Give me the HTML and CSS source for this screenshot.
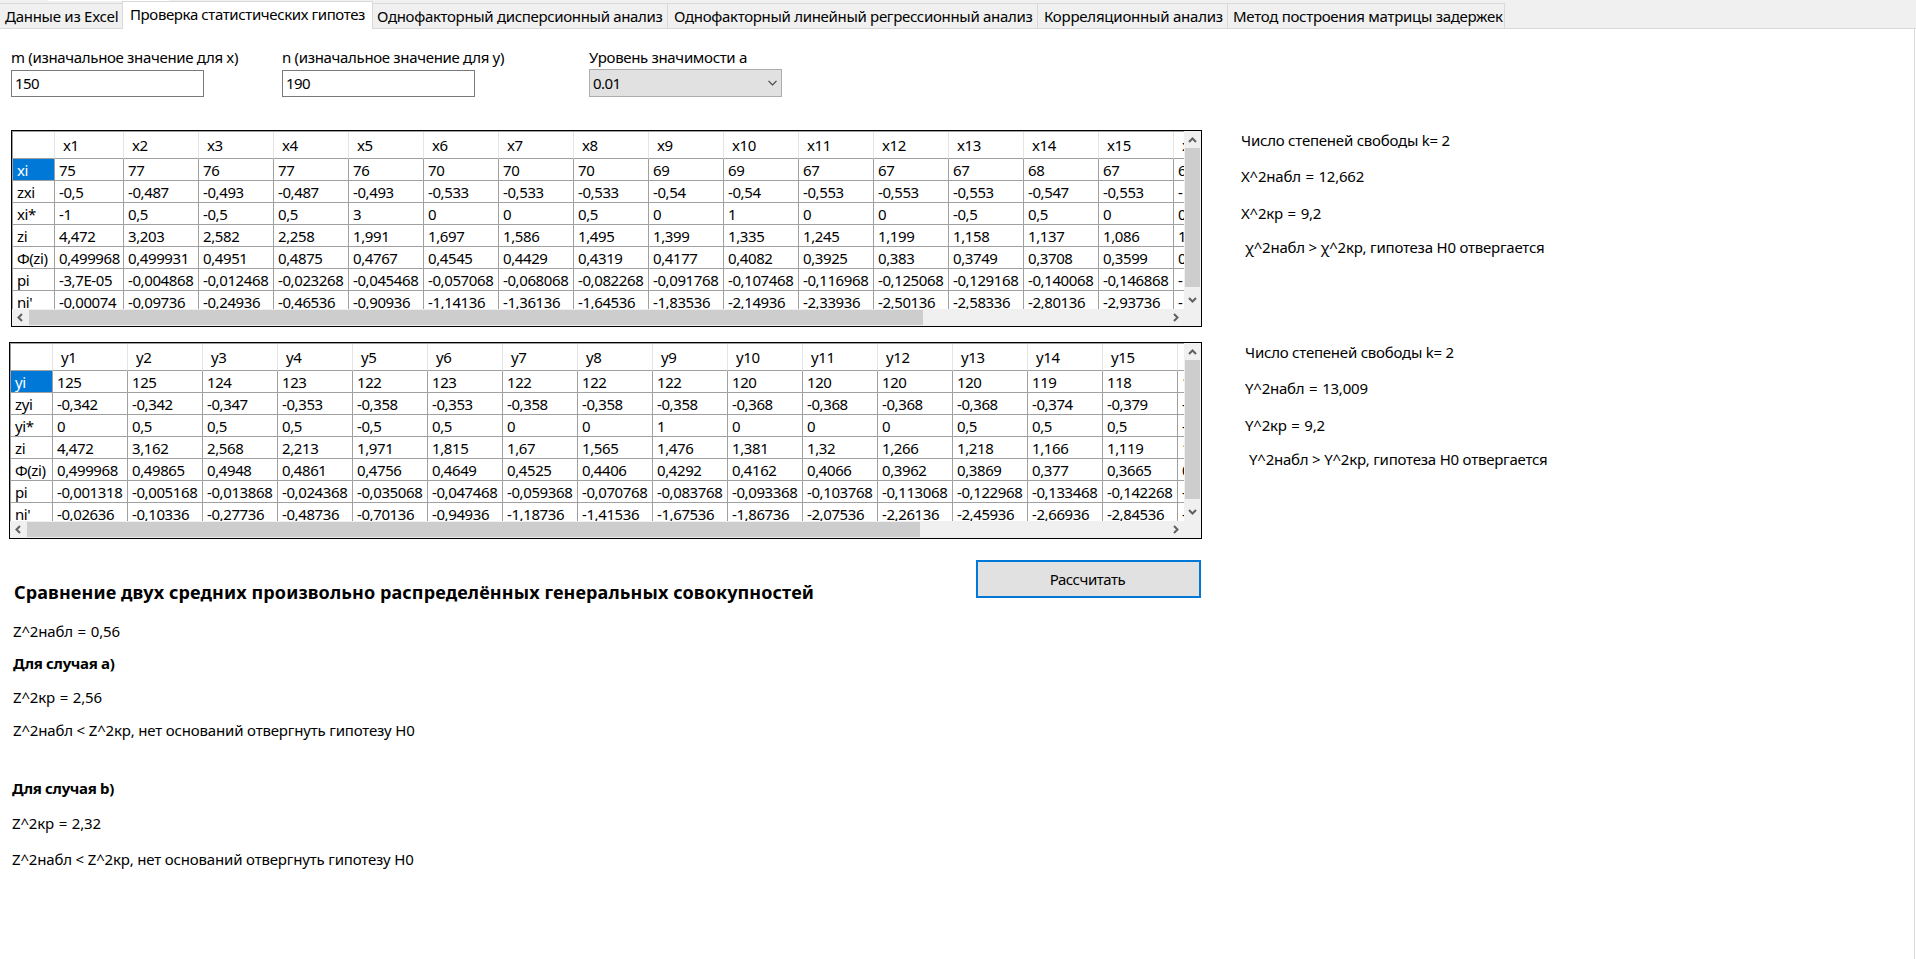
FILE: index.html
```html
<!DOCTYPE html>
<html lang="ru"><head><meta charset="utf-8"><title>Проверка статистических гипотез</title>
<link rel="stylesheet" href="styles.css"></head>
<body>
<nav class="tabs">
<div class="tab t1"><span>Данные из Excel</span></div>
<div class="tab t2 active"><span>Проверка статистических гипотез</span></div>
<div class="tab t3"><span>Однофакторный дисперсионный анализ</span></div>
<div class="tab t4"><span>Однофакторный линейный регрессионный анализ</span></div>
<div class="tab t5"><span>Корреляционный анализ</span></div>
<div class="tab t6"><span>Метод построения матрицы задержек</span></div>
</nav>
<main class="page">
<section class="fields">
<label class="field f1"><span>m (изначальное значение для x)</span><div class="box">150</div></label>
<label class="field f2"><span>n (изначальное значение для y)</span><div class="box">190</div></label>
<label class="field f3"><span>Уровень значимости a</span><div class="box combo">0.01<svg width="9" height="6" viewBox="0 0 9 6"><path d="M.5 .8 4.5 4.8 8.5 .8"/></svg></div></label>
</section>
<section class="pair">
<div class="grid gx">
<div class="view"><table><colgroup><col class="h"><col class="first"><col span="15" class="c"></colgroup>
<tr class="head"><th><th>x1<th>x2<th>x3<th>x4<th>x5<th>x6<th>x7<th>x8<th>x9<th>x10<th>x11<th>x12<th>x13<th>x14<th>x15<th>x
<tr><th class="sel">xi<td>75<td>77<td>76<td>77<td>76<td>70<td>70<td>70<td>69<td>69<td>67<td>67<td>67<td>68<td>67<td>6
<tr><th>zxi<td>-0,5<td>-0,487<td>-0,493<td>-0,487<td>-0,493<td>-0,533<td>-0,533<td>-0,533<td>-0,54<td>-0,54<td>-0,553<td>-0,553<td>-0,553<td>-0,547<td>-0,553<td>-
<tr><th>xi*<td>-1<td>0,5<td>-0,5<td>0,5<td>3<td>0<td>0<td>0,5<td>0<td>1<td>0<td>0<td>-0,5<td>0,5<td>0<td>0
<tr><th>zi<td>4,472<td>3,203<td>2,582<td>2,258<td>1,991<td>1,697<td>1,586<td>1,495<td>1,399<td>1,335<td>1,245<td>1,199<td>1,158<td>1,137<td>1,086<td>1
<tr><th>Φ(zi)<td>0,499968<td>0,499931<td>0,4951<td>0,4875<td>0,4767<td>0,4545<td>0,4429<td>0,4319<td>0,4177<td>0,4082<td>0,3925<td>0,383<td>0,3749<td>0,3708<td>0,3599<td>0
<tr><th>pi<td>-3,7E-05<td>-0,004868<td>-0,012468<td>-0,023268<td>-0,045468<td>-0,057068<td>-0,068068<td>-0,082268<td>-0,091768<td>-0,107468<td>-0,116968<td>-0,125068<td>-0,129168<td>-0,140068<td>-0,146868<td>-
<tr><th>ni'<td>-0,00074<td>-0,09736<td>-0,24936<td>-0,46536<td>-0,90936<td>-1,14136<td>-1,36136<td>-1,64536<td>-1,83536<td>-2,14936<td>-2,33936<td>-2,50136<td>-2,58336<td>-2,80136<td>-2,93736<td>-
</table></div>
<div class="vbar"><svg viewBox="0 0 9 6"><path d="M1 5 4.5 1.5 8 5"/></svg><i></i><svg viewBox="0 0 9 6"><path d="M1 1 4.5 4.5 8 1"/></svg></div>
<div class="hbar"><svg viewBox="0 0 6 9"><path d="M5 1 1.5 4.5 5 8"/></svg><i></i><svg viewBox="0 0 6 9"><path d="M1 1 4.5 4.5 1 8"/></svg></div>
</div>
<div class="notes nx"><p class="n1">Число степеней свободы k= 2</p><p class="n2">X^2набл = 12,662</p><p class="n3">X^2кр = 9,2</p><p class="n4">χ^2набл &gt; χ^2кр, гипотеза H0 отвергается</p></div>
</section>
<section class="pair">
<div class="grid gy">
<div class="view"><table><colgroup><col class="h"><col span="16" class="c"></colgroup>
<tr class="head"><th><th>y1<th>y2<th>y3<th>y4<th>y5<th>y6<th>y7<th>y8<th>y9<th>y10<th>y11<th>y12<th>y13<th>y14<th>y15<th>
<tr><th class="sel">yi<td>125<td>125<td>124<td>123<td>122<td>123<td>122<td>122<td>122<td>120<td>120<td>120<td>120<td>119<td>118<td>1
<tr><th>zyi<td>-0,342<td>-0,342<td>-0,347<td>-0,353<td>-0,358<td>-0,353<td>-0,358<td>-0,358<td>-0,358<td>-0,368<td>-0,368<td>-0,368<td>-0,368<td>-0,374<td>-0,379<td>-
<tr><th>yi*<td>0<td>0,5<td>0,5<td>0,5<td>-0,5<td>0,5<td>0<td>0<td>1<td>0<td>0<td>0<td>0,5<td>0,5<td>0,5<td>-
<tr><th>zi<td>4,472<td>3,162<td>2,568<td>2,213<td>1,971<td>1,815<td>1,67<td>1,565<td>1,476<td>1,381<td>1,32<td>1,266<td>1,218<td>1,166<td>1,119<td>1
<tr><th>Φ(zi)<td>0,499968<td>0,49865<td>0,4948<td>0,4861<td>0,4756<td>0,4649<td>0,4525<td>0,4406<td>0,4292<td>0,4162<td>0,4066<td>0,3962<td>0,3869<td>0,377<td>0,3665<td>0
<tr><th>pi<td>-0,001318<td>-0,005168<td>-0,013868<td>-0,024368<td>-0,035068<td>-0,047468<td>-0,059368<td>-0,070768<td>-0,083768<td>-0,093368<td>-0,103768<td>-0,113068<td>-0,122968<td>-0,133468<td>-0,142268<td>-
<tr><th>ni'<td>-0,02636<td>-0,10336<td>-0,27736<td>-0,48736<td>-0,70136<td>-0,94936<td>-1,18736<td>-1,41536<td>-1,67536<td>-1,86736<td>-2,07536<td>-2,26136<td>-2,45936<td>-2,66936<td>-2,84536<td>-
</table></div>
<div class="vbar"><svg viewBox="0 0 9 6"><path d="M1 5 4.5 1.5 8 5"/></svg><i></i><svg viewBox="0 0 9 6"><path d="M1 1 4.5 4.5 8 1"/></svg></div>
<div class="hbar"><svg viewBox="0 0 6 9"><path d="M5 1 1.5 4.5 5 8"/></svg><i></i><svg viewBox="0 0 6 9"><path d="M1 1 4.5 4.5 1 8"/></svg></div>
</div>
<div class="notes ny"><p class="n1">Число степеней свободы k= 2</p><p class="n2">Y^2набл = 13,009</p><p class="n3">Y^2кр = 9,2</p><p class="n4">Y^2набл &gt; Y^2кр, гипотеза H0 отвергается</p></div>
</section>
<section class="bottom">
<div class="results">
<h2>Сравнение двух средних произвольно распределённых генеральных совокупностей</h2>
<p class="r1">Z^2набл = 0,56</p>
<h3 class="ra">Для случая a)</h3>
<p class="r2">Z^2кр = 2,56</p>
<p class="r3">Z^2набл &lt; Z^2кр, нет оснований отвергнуть гипотезу H0</p>
<div class="caseb">
<h3>Для случая b)</h3>
<p class="r4">Z^2кр = 2,32</p>
<p class="r5">Z^2набл &lt; Z^2кр, нет оснований отвергнуть гипотезу H0</p>
</div>
</div>
<button class="calc" type="button"><span>Рассчитать</span></button>
</section>
</main>
</body></html>
```
FILE: styles.css
```css
* { box-sizing: border-box; }
body { margin: 0; height: 959px; overflow: hidden; background: #fff; color: #000; font: 15px/20px "Noto Sans", "Open Sans", sans-serif; letter-spacing: -.33px; }
p, h2, h3 { margin: 0; white-space: nowrap; }
h3 { font-size: 15px; line-height: 20px; letter-spacing: -.33px; }

.tabs { display: flex; align-items: flex-end; height: 29px; background: linear-gradient(#fff, #fff) 48px 0 / 121px 1px no-repeat #f0f0f0; border-bottom: 1px solid #d9d9d9; }
.tab { flex: none; height: 25px; padding: 2px 0 0 5px; border: 1px solid #d9d9d9; border-width: 1px 1px 0 0; white-space: nowrap; }
.tab.active { height: 28px; margin-bottom: -1px; padding: 3px 0 0 7px; background: #fff; border-left-width: 1px; line-height: 18px; letter-spacing: -.38px; }
.t1 { width: 122px; border-right: 0; letter-spacing: -.27px; }
.t2 { width: 251px; }
.t3 { width: 295px; padding-left: 4px; }
.t4 { width: 370px; padding-left: 6px; letter-spacing: -.31px; }
.t5 { width: 190px; padding-left: 6px; letter-spacing: -.23px; }
.t6 { width: 277px; letter-spacing: -.28px; }

.page { height: 930px; width: 1915px; border-right: 1px solid #d9d9d9; }
.fields { display: flex; height: 101px; padding: 18px 0 0 11px; }
.field { width: 193px; white-space: nowrap; }
.f2 { margin-left: 78px; }
.f3 { margin-left: 114px; }
.box { width: 193px; height: 27px; margin-top: 3px; padding: 2px 3px; border: 1px solid #7a7a7a; letter-spacing: -.6px; }
.combo { display: flex; align-items: center; justify-content: space-between; height: 28px; margin-top: 2px; background: #e1e1e1; border-color: #adadad; }
.combo svg { fill: none; stroke: #444; stroke-width: 1.2; margin-right: 1px; }

.pair { display: flex; align-items: flex-start; height: 212px; }
.grid { display: grid; grid-template: 178px 17px / 1fr 17px; height: 197px; border: 1px solid #000; }
.gx { width: 1191px; margin-left: 11px; }
.gy { width: 1193px; margin-left: 9px; }
.view { min-width: 0; overflow: hidden; border: 1px solid #a0a0a0; border-width: 1px 0 0 1px; }
table { width: 0; table-layout: fixed; border-spacing: 0; }
.h { width: 42px; }
.first { width: 69px; }
.c { width: 75px; }
th, td { height: 22px; padding: 2px 0 0 4px; border: 1px solid #a0a0a0; border-width: 0 1px 1px 0; font-weight: 400; line-height: 19px; letter-spacing: -.4px; text-align: left; white-space: nowrap; overflow: hidden; }
.head th { height: 27px; padding: 1px 0 0 8px; border-right-color: #e5e5e5; }
.sel { background: #0078d7; color: #fff; }
.vbar { display: flex; flex-direction: column; align-items: center; background: #f0f0f0; }
.vbar i { width: 15px; height: 139px; background: #cdcdcd; }
.vbar svg { width: 9px; height: 6px; margin: 6px 0 5px; }
.vbar svg:last-child { margin: auto 0 6px; }
.hbar { grid-column: 1 / 3; display: flex; align-items: center; background: #f0f0f0; }
.hbar i { height: 15px; width: 894px; background: #cdcdcd; }
.gy .hbar i { width: 893px; }
.hbar svg { width: 6px; height: 9px; margin: 0 6px 0 5px; }
.hbar svg:last-child { margin: 0 22px 0 auto; }
.grid svg { fill: none; stroke: #606060; stroke-width: 2; }

.notes { letter-spacing: -.22px; }
.notes p { height: 20px; }
.nx { margin-left: 39px; }
.ny { margin-left: 43px; }
.n2 { margin-top: 16px; word-spacing: 1px; }
.n3 { margin-top: 17px; word-spacing: 1px; }
.n4 { margin: 14px 0 0 4px; }

.bottom { display: flex; justify-content: space-between; width: 1201px; padding: 6px 0 0 13px; }
.results { padding-top: 19px; letter-spacing: -.17px; }
h2 { font-size: 18px; line-height: 26px; padding-left: 1px; letter-spacing: .11px; }
.r1 { margin-top: 16px; word-spacing: 1px; }
.ra { margin-top: 12px; }
.r2 { margin-top: 14px; word-spacing: 1px; }
.r3 { margin-top: 13px; }
.caseb { margin: 38px 0 0 -1px; }
.r4 { margin-top: 15px; word-spacing: 1px; }
.r5 { margin-top: 16px; }
.calc { width: 225px; height: 38px; padding: 0 2px 0 0; background: #e1e1e1; border: 2px solid #0078d7; font: inherit; letter-spacing: -.45px; color: #000; }
```
